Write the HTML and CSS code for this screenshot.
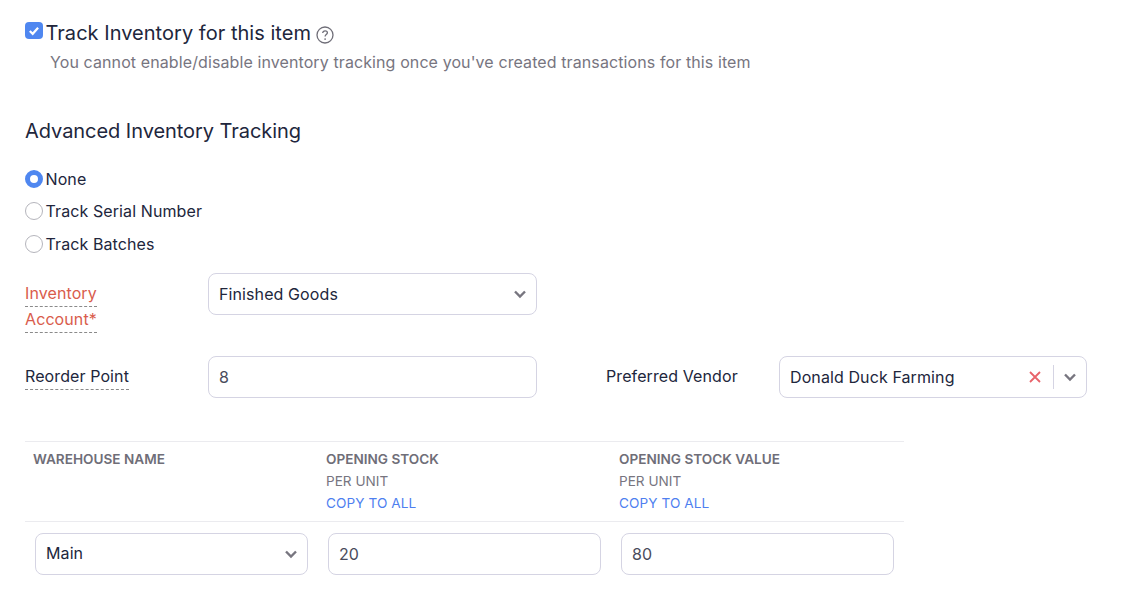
FILE: index.html
```html
<!DOCTYPE html>
<html lang="en">
<head>
<meta charset="utf-8">
<title>Track Inventory</title>
<link rel="stylesheet" href="styles.css">
</head>
<body>
<main class="page">
  <div class="track-row">
    <span class="checkbox">
      <svg width="18" height="17" viewBox="0 0 18 17"><path d="M4.8 9l2.9 2.8 5.4-6" fill="none" stroke="#fff" stroke-width="2.2"/></svg>
    </span>
    <span class="track-title">Track Inventory for this item</span>
    <svg class="help" width="18" height="18" viewBox="0 0 18 18"><circle cx="9" cy="9" r="8" fill="none" stroke="#6f6e78" stroke-width="1.3"/><path d="M6.7 7.1c0-1.4 1.1-2.3 2.4-2.3s2.3.9 2.3 2c0 1.7-2.3 1.9-2.3 3.6" fill="none" stroke="#6f6e78" stroke-width="1.3"/><circle cx="9.1" cy="13.1" r=".85" fill="#6f6e78"/></svg>
  </div>
  <p class="track-note">You cannot enable/disable inventory tracking once you've created transactions for this item</p>
  <h2 class="section-title">Advanced Inventory Tracking</h2>
  <div class="radios">
    <div class="radio-row"><span class="radio radio-on"></span><span>None</span></div>
    <div class="radio-row"><span class="radio"></span><span>Track Serial Number</span></div>
    <div class="radio-row"><span class="radio"></span><span>Track Batches</span></div>
  </div>
  <div class="form-row account-row">
    <div class="label-col required"><span class="dashed-line">Inventory</span><span class="dashed-line">Account*</span></div>
    <div class="control">
      <span>Finished Goods</span>
      <svg class="chevron" width="14" height="10" viewBox="0 0 14 10"><path d="M2 2.5l5 5 5-5" fill="none" stroke="#77757f" stroke-width="2.4"/></svg>
    </div>
  </div>
  <div class="form-row reorder-row">
    <div class="label-col"><span class="dashed">Reorder Point</span></div>
    <div class="control"><span class="value">8</span></div>
    <div class="vendor-label">Preferred Vendor</div>
    <div class="control vendor">
      <span>Donald Duck Farming</span>
      <span class="vendor-actions">
        <svg class="clear" width="14" height="14" viewBox="0 0 14 14"><path d="M2 2l10 10M12 2L2 12" fill="none" stroke="#e8636a" stroke-width="1.8"/></svg>
        <span class="divider"></span>
        <svg class="chevron" width="14" height="10" viewBox="0 0 14 10"><path d="M2 2.5l5 5 5-5" fill="none" stroke="#77757f" stroke-width="2.4"/></svg>
      </span>
    </div>
  </div>
  <section class="stock">
    <div class="stock-head">
      <div class="head-cell"><div class="head-title">WAREHOUSE NAME</div></div>
      <div class="head-cell"><div class="head-title">OPENING STOCK</div><div class="head-sub">PER UNIT</div><a class="head-link">COPY TO ALL</a></div>
      <div class="head-cell"><div class="head-title">OPENING STOCK VALUE</div><div class="head-sub">PER UNIT</div><a class="head-link">COPY TO ALL</a></div>
    </div>
    <div class="stock-body">
      <div class="control"><span class="warehouse">Main</span><svg class="chevron" width="14" height="10" viewBox="0 0 14 10"><path d="M2 2.5l5 5 5-5" fill="none" stroke="#77757f" stroke-width="2.4"/></svg></div>
      <div class="control"><span class="value">20</span></div>
      <div class="control"><span class="value">80</span></div>
    </div>
  </section>
</main>
</body>
</html>
```
FILE: styles.css
```css
* { box-sizing: border-box; }
html, body { margin: 0; padding: 0; background: #fff; }
body { font-family: Inter, "Liberation Sans", sans-serif; color: #21263c; font-size: 16px; letter-spacing: 0.1px; overflow: hidden; }
.page { width: 1125px; height: 591px; padding: 22px 0 0 25px; }
.track-row { display: flex; align-items: center; height: 22px; }
.checkbox { width: 18px; height: 17px; border-radius: 4px; background: #4f87f0; margin-right: 2.5px; display: block; line-height: 0; margin-top: -5px; }
.track-title { font-size: 20px; line-height: 22px; letter-spacing: 0.03px; }
.help { margin-left: 5px; margin-top: 3px; }
.track-note { margin: 8px 0 0 25px; line-height: 20px; color: #77757f; }
.section-title { margin: 47px 0 0; font-size: 20px; line-height: 24px; font-weight: 400; letter-spacing: -0.05px; }
.radios { margin-top: 19.5px; }
.radio-row { display: flex; align-items: center; height: 32.5px; }
.radio { width: 18px; height: 18px; border-radius: 50%; border: 1px solid #b5b5bc; margin-right: 2.5px; background: #fff; }
.radio-on { border: 5px solid #4f87f0; }
.form-row { display: flex; }
.account-row { margin-top: 12.5px; }
.reorder-row { margin-top: 23px; }
.label-col { width: 183px; line-height: 26px; }
.account-row .label-col { padding-top: 8px; }
.dashed-line { display: block; width: 72px; height: 26px; line-height: 24px; border-bottom: 1px dashed #8a8a8a; }
.label-col .dashed { display: inline-block; height: 27px; border-bottom: 1px dashed #8a8a8a; }
.reorder-row .label-col { padding-top: 7px; }
.required { color: #d95c4c; }
.control { width: 329px; height: 42px; border: 1px solid #d5d4e3; border-radius: 8px; padding: 0 10px; display: flex; align-items: center; justify-content: space-between; background: #fff; }
.account-row .control { align-self: flex-start; }
.value { color: #4a4c5c; }
.warehouse { margin-top: -2px; }
.chevron { flex: none; margin-right: -1px; }
.vendor-label { margin-left: 69px; width: 173px; line-height: 26px; padding-top: 7px; }
.vendor { width: 308px; }
.vendor-actions { display: flex; align-items: center; }
.clear { margin-right: 11px; }
.divider { width: 1px; height: 24px; background: #d5d4e3; margin-right: 9px; }
.stock { width: 879px; margin-top: 43px; border-top: 1px solid #ebebef; }
.stock-head { display: grid; grid-template-columns: repeat(3, 293px); border-bottom: 1px solid #ebebef; height: 80px; }
.head-cell { padding: 6px 0 0 8px; font-size: 13.6px; line-height: 22px; letter-spacing: 0; }
.head-title { font-weight: 600; color: #6f6e78; }
.head-sub { color: #77757f; }
.head-link { color: #4f7ff0; display: block; letter-spacing: 0.08px; }
.stock-body { display: grid; grid-template-columns: repeat(3, 273px); gap: 20px; padding: 11px 0 0 10px; }
.stock-body .control { width: 273px; }
```
